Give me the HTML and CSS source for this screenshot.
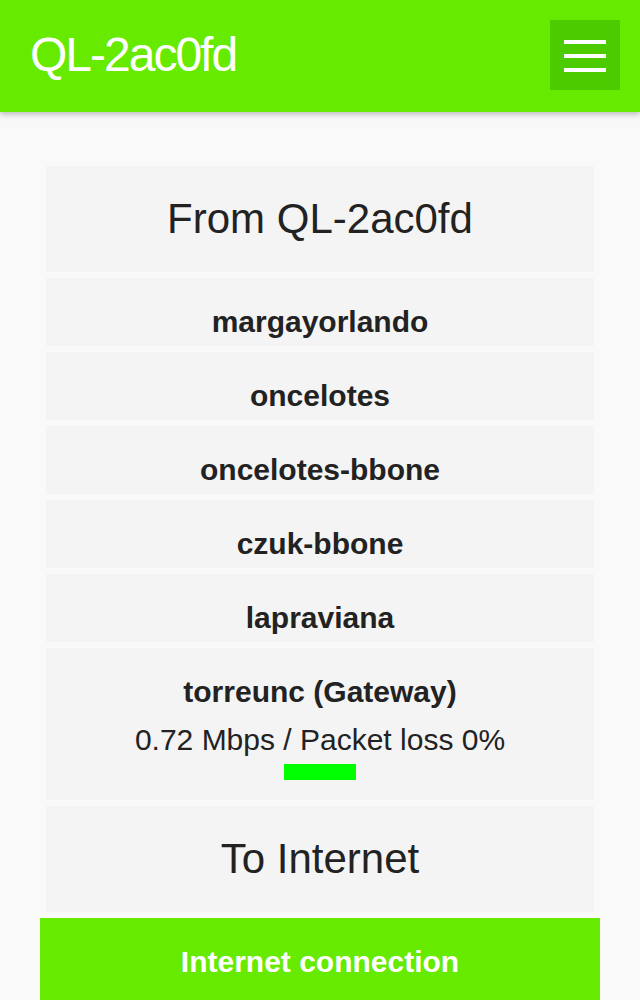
FILE: index.html
```html
<!DOCTYPE html>
<html lang="en">
<head>
<meta charset="utf-8">
<title>QL-2ac0fd</title>
<link rel="stylesheet" href="styles.css">
</head>
<body>
<header class="topbar">
  <h1 class="brand">QL-2ac0fd</h1>
  <button class="menu-btn" aria-label="Menu">
    <span class="menu-line"></span>
    <span class="menu-line"></span>
    <span class="menu-line"></span>
  </button>
</header>
<main class="path">
  <div class="card card-big">From QL-2ac0fd</div>
  <div class="card card-node">margayorlando</div>
  <div class="card card-node">oncelotes</div>
  <div class="card card-node">oncelotes-bbone</div>
  <div class="card card-node">czuk-bbone</div>
  <div class="card card-node">lapraviana</div>
  <div class="card card-node card-gateway">
    <div class="node-name">torreunc (Gateway)</div>
    <div class="node-stats">0.72 Mbps / Packet loss 0%</div>
    <div class="node-bar"></div>
  </div>
  <div class="card card-big">To Internet</div>
  <div class="inet-btn">Internet connection</div>
</main>
</body>
</html>
```
FILE: styles.css
```css
html, body {
  margin: 0;
  padding: 0;
}
body {
  background: #f9f9f9;
  font-family: "Liberation Sans", Arial, sans-serif;
  color: #222;
}
.topbar {
  position: relative;
  z-index: 1;
  display: flex;
  justify-content: space-between;
  align-items: flex-start;
  padding: 20px 20px 22px 30px;
  background: #66ea00;
  box-shadow: 0 2px 6px rgba(0, 0, 0, 0.28);
}
.brand {
  margin: 7px 0 0 0;
  font-size: 48px;
  line-height: 56px;
  font-weight: normal;
  letter-spacing: -2px;
  color: #fff;
}
.menu-btn {
  width: 70px;
  height: 70px;
  border: 0;
  margin: 0;
  padding: 20px 14px 0;
  background: #4ccb00;
  display: flex;
  flex-direction: column;
  gap: 10px;
  box-sizing: border-box;
}
.menu-line {
  display: block;
  width: 42px;
  height: 4px;
  background: #fff;
}
.path {
  width: 560px;
  margin: 54px auto 0;
  display: flex;
  flex-direction: column;
  gap: 6px;
}
.card {
  margin: 0 6px;
  background: #f4f4f4;
  text-align: center;
}
.card-big {
  font-size: 42px;
  line-height: 48px;
  padding: 29px 0;
}
.card-node {
  font-size: 30px;
  line-height: 34px;
  font-weight: bold;
  padding: 27px 0 7px;
}
.card-gateway {
  display: flex;
  flex-direction: column;
  align-items: center;
  padding-bottom: 20px;
}
.node-stats {
  font-weight: normal;
  margin-top: 14px;
}
.node-bar {
  width: 72px;
  height: 16px;
  margin-top: 7px;
  background: #00ff00;
}
.inet-btn {
  background: #66ea00;
  color: #fff;
  font-size: 30px;
  line-height: 34px;
  font-weight: bold;
  text-align: center;
  padding: 27px 0;
}
```
